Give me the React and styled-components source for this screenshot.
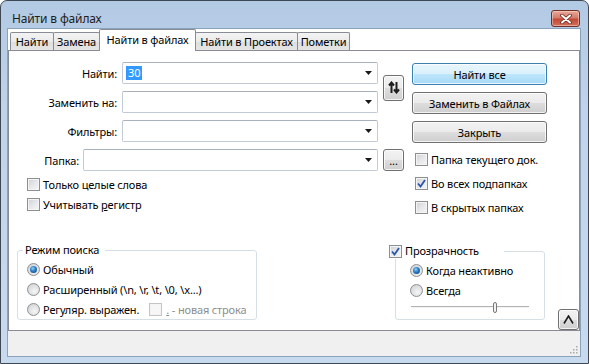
import React from 'react';
import styled, { createGlobalStyle } from 'styled-components';

const GlobalStyle = createGlobalStyle`
	html, body {
		margin: 0;
		padding: 0;
		background: #ffffff;
	}
	body {
		font-family: 'Noto Sans', 'Open Sans', sans-serif;
		font-size: 11px;
		letter-spacing: -0.15px;
		color: #000;
	}
`;

const Window = styled.div`
	width: 589px;
	height: 364px;
	box-sizing: border-box;
	display: flex;
	flex-direction: column;
	border: 1px solid #3f4852;
	border-radius: 7px 7px 0 0;
	background: linear-gradient(#b3cae4 0%, #bfd3ea 30%, #c8daee 100%);
	overflow: hidden;
`;

const TitleBar = styled.div`
	height: 27px;
	flex-shrink: 0;
	display: flex;
	align-items: flex-start;
	justify-content: space-between;
	padding: 0 8px 0 11px;
`;

const Title = styled.div`
	padding-top: 10px;
	line-height: 16px;
	font-size: 12px;
	color: #1e1e1e;
`;

const CloseButton = styled.div`
	margin-top: 9px;
	width: 29px;
	height: 17px;
	box-sizing: border-box;
	border: 1px solid #6e3128;
	border-radius: 3px;
	background: linear-gradient(#e9a99c 0%, #d47c6c 45%, #c24a37 55%, #d0705a 100%);
	box-shadow: inset 0 0 0 1px rgba(255, 220, 210, 0.5);
	display: flex;
	align-items: center;
	justify-content: center;
`;

const Frame = styled.div`
	flex: 1;
	display: flex;
	padding: 0 7px 6px 6px;
`;

const Client = styled.div`
	flex: 1;
	display: flex;
	flex-direction: column;
	border: 1px solid #8ba2bd;
	background: #ffffff;
`;

const TabStrip = styled.div`
	height: 21px;
	display: flex;
	align-items: flex-end;
	padding-left: 2px;
`;

const Tab = styled.div`
	position: relative;
	box-sizing: border-box;
	width: ${p => p.$w}px;
	height: ${p => (p.$active ? 22 : 18)}px;
	margin-bottom: ${p => (p.$active ? -1 : 0)}px;
	margin-left: ${p => (p.$first ? 0 : -1)}px;
	z-index: ${p => (p.$active ? 2 : 1)};
	border: 1px solid #898c95;
	border-bottom: ${p => (p.$active ? 'none' : '0')};
	border-radius: 2px 2px 0 0;
	background: ${p =>
		p.$active ? '#ffffff' : 'linear-gradient(#f3f3f3 0%, #ebebeb 50%, #dedede 51%, #e5e5e5 100%)'};
	display: flex;
	align-items: center;
	justify-content: center;
	padding-bottom: ${p => (p.$active ? 3 : 0)}px;
	white-space: nowrap;
`;

const Panel = styled.div`
	height: 281px;
	box-sizing: border-box;
	border: 1px solid #898c95;
	background: #ffffff;
	display: flex;
	flex-direction: column;
`;

const TopSection = styled.div`
	display: flex;
	padding-top: 11px;
`;

const LeftCol = styled.div`
	width: 395px;
	display: flex;
	flex-direction: column;
`;

const FormGrid = styled.div`
	display: grid;
	grid-template-columns: 108px 256px 21px;
	grid-template-rows: repeat(4, 22px);
	column-gap: 5px;
	row-gap: 7px;
`;

const Label = styled.div`
	display: flex;
	align-items: center;
	justify-content: flex-end;
	white-space: nowrap;
`;

const FolderRow = styled.div`
	grid-column: 1 / 3;
	display: flex;
	align-items: center;
	gap: 4px;
	& > ${Label} {
		flex: 1;
	}
`;

const Combo = styled.div`
	box-sizing: border-box;
	height: 22px;
	width: ${p => (p.$w ? `${p.$w}px` : 'auto')};
	display: flex;
	align-items: center;
	border: 1px solid #c2cad5;
	border-top-color: #a9b1bd;
	border-radius: 2px;
	background: #ffffff;
	padding: 0 5px 0 3px;
`;

const ComboText = styled.div`
	flex: 1;
	display: flex;
	align-items: center;
`;

const Selected = styled.span`
	background: #3399ff;
	color: #ffffff;
	line-height: 14px;
	padding: 0 2px;
`;

const Button = styled.div`
	box-sizing: border-box;
	width: ${p => p.$w || 135}px;
	height: ${p => p.$h || 22}px;
	border: 1px solid ${p => (p.$primary ? '#3c7fb1' : '#707070')};
	border-radius: 3px;
	background: ${p =>
		p.$primary
			? 'linear-gradient(#eaf6fd 0%, #d9f0fc 50%, #bee6fd 51%, #a7d9f5 100%)'
			: 'linear-gradient(#f2f2f2 0%, #ebebeb 50%, #dddddd 51%, #cfcfcf 100%)'};
	box-shadow: inset 0 0 0 1px rgba(255, 255, 255, 0.75);
	display: flex;
	align-items: center;
	justify-content: center;
	white-space: nowrap;
`;

const SwapCell = styled.div`
	grid-row: 1 / 3;
	grid-column: 3;
	display: flex;
	align-items: center;
`;

const ChecksLeft = styled.div`
	display: flex;
	flex-direction: column;
	gap: 7px;
	padding: 7px 0 0 18px;
`;

const RightCol = styled.div`
	margin-left: 8px;
	width: 135px;
	display: flex;
	flex-direction: column;
	padding-top: 1px;
	gap: 7px;
`;

const ChecksRight = styled.div`
	display: flex;
	flex-direction: column;
	gap: 11px;
	padding: 3px 0 0 3px;
`;

const CheckRow = styled.div`
	display: flex;
	align-items: center;
	height: 13px;
	gap: 3px;
	white-space: nowrap;
`;

const Box = styled.div`
	width: 13px;
	height: 13px;
	flex-shrink: 0;
	box-sizing: border-box;
	border: 1px solid ${p => (p.$disabled ? '#c4c4c4' : '#8e8f8f')};
	background: ${p =>
		p.$disabled ? '#f7f7f7' : 'linear-gradient(135deg, #cdd0d5 0%, #e6e7ea 50%, #f6f6f6 100%)'};
	box-shadow: inset 0 0 0 1px #f4f4f4;
	display: flex;
	align-items: center;
	justify-content: center;
`;

const BottomSection = styled.div`
	margin-top: auto;
	display: flex;
	align-items: flex-end;
	padding-left: 8px;
`;

const Group = styled.fieldset`
	margin: 0 ${p => p.$mr || 0}px 10px ${p => (p.$auto ? 'auto' : '0')};
	width: ${p => p.$w}px;
	box-sizing: border-box;
	border: 1px solid #d5dfe5;
	border-radius: 3px;
	padding: 1px 0 ${p => p.$pb || 0}px ${p => p.$pl}px;
	min-width: 0;
`;

const Legend = styled.legend`
	position: relative;
	left: ${p => p.$shift || 0}px;
	padding: 0 2px;
	line-height: 16px;
	display: flex;
	align-items: center;
	gap: 3px;
	background: #ffffff;
`;

const RadioRow = styled.div`
	height: 20px;
	display: flex;
	align-items: center;
	gap: 3px;
	white-space: nowrap;
`;

const Radio = styled.div`
	width: 13px;
	height: 13px;
	flex-shrink: 0;
	box-sizing: border-box;
	border-radius: 50%;
	border: 1px solid #8e8f8f;
	background: radial-gradient(circle at 60% 65%, #f6f6f6 0%, #dcdde0 60%, #c9ccd1 100%);
	display: flex;
	align-items: center;
	justify-content: center;
`;

const RadioDot = styled.div`
	width: 7px;
	height: 7px;
	border-radius: 50%;
	background: radial-gradient(circle at 40% 35%, #8fd0f7 0%, #2b7bc0 45%, #0d3a72 100%);
`;

const Disabled = styled.span`
	color: #8d8d8d;
	margin-left: 7px;
	display: flex;
	align-items: center;
	gap: 4px;
`;

const SliderRow = styled.div`
	height: 14px;
	width: 118px;
	margin-left: 1px;
	display: flex;
	align-items: center;
`;

const Track = styled.div`
	flex: 1;
	height: 0;
	border-top: 1px solid #b4b4b4;
	border-bottom: 1px solid #f3f3f3;
	display: flex;
	align-items: center;
`;

const Thumb = styled.div`
	margin-left: 82px;
	width: 4px;
	height: 11px;
	box-sizing: border-box;
	border: 1px solid #7a7a7a;
	border-radius: 2px;
	background: #f2f2f2;
`;

const Footer = styled.div`
	flex: 1;
	background: #f0f0f0;
	display: flex;
	justify-content: flex-end;
	align-items: flex-end;
	padding: 0 2px 2px 0;
`;

const DropArrow = () => (
	<svg width="7" height="4" viewBox="0 0 7 4">
		<path d="M0 0H7L3.5 4Z" fill="#1a1a1a" />
	</svg>
);

const SwapIcon = () => (
	<svg width="12" height="13" viewBox="0 0 12 13">
		<path d="M3.5 12V2M1 4.5L3.5 1.5L6 4.5" stroke="#1e1e1e" strokeWidth="2" fill="none" />
		<path d="M8.5 1V11M6 8.5L8.5 11.5L11 8.5" stroke="#1e1e1e" strokeWidth="2" fill="none" />
	</svg>
);

const CloseIcon = () => (
	<svg width="12" height="10" viewBox="0 0 12 10">
		<path d="M2 1.5L10 8.5M10 1.5L2 8.5" stroke="#6b2a22" strokeWidth="3.6" strokeLinecap="round" />
		<path d="M2 1.5L10 8.5M10 1.5L2 8.5" stroke="#ffffff" strokeWidth="2" strokeLinecap="round" />
	</svg>
);

const Check = () => (
	<svg width="9" height="9" viewBox="0 0 9 9">
		<path d="M1 4.5L3.5 7.5L8 1" stroke="#2a56a6" strokeWidth="1.8" fill="none" />
	</svg>
);

const UpChevron = () => (
	<svg width="11" height="9" viewBox="0 0 11 9">
		<path d="M1 8.5L5.5 1L10 8.5" stroke="#1e1e1e" strokeWidth="1.6" fill="none" />
	</svg>
);

const Grip = () => (
	<svg width="10" height="10" viewBox="0 0 10 10">
		{[[8, 2], [5, 5], [8, 5], [2, 8], [5, 8], [8, 8]].map(([x, y], i) => (
			<rect key={i} x={x} y={y} width="1.5" height="1.5" fill="#a9a9a9" />
		))}
	</svg>
);

const CheckBox = ({ checked, disabled }) => (
	<Box $disabled={disabled}>{checked && <Check />}</Box>
);

const tabs = [
	{ text: 'Найти', w: 44 },
	{ text: 'Замена', w: 47 },
	{ text: 'Найти в файлах', w: 97, active: true },
	{ text: 'Найти в Проектах', w: 103 },
	{ text: 'Пометки', w: 53 },
];

const App = () => {
	return (
		<>
			<GlobalStyle />
			<Window>
				<TitleBar>
					<Title>Найти в файлах</Title>
					<CloseButton>
						<CloseIcon />
					</CloseButton>
				</TitleBar>
				<Frame>
					<Client>
						<TabStrip>
							{tabs.map((t, i) => (
								<Tab key={t.text} $w={t.w} $active={t.active} $first={i === 0}>
									{t.text}
								</Tab>
							))}
						</TabStrip>
						<Panel>
							<TopSection>
								<LeftCol>
									<FormGrid>
										<Label>Найти:</Label>
										<Combo>
											<ComboText>
												<Selected>30</Selected>
											</ComboText>
											<DropArrow />
										</Combo>
										<SwapCell>
											<Button $w={21} $h={26}>
												<SwapIcon />
											</Button>
										</SwapCell>
										<Label>Заменить на:</Label>
										<Combo>
											<ComboText />
											<DropArrow />
										</Combo>
										<Label>Фильтры:</Label>
										<Combo>
											<ComboText />
											<DropArrow />
										</Combo>
										<FolderRow>
											<Label>Папка:</Label>
											<Combo $w={295}>
												<ComboText />
												<DropArrow />
											</Combo>
										</FolderRow>
										<Button $w={21}>...</Button>
									</FormGrid>
									<ChecksLeft>
										<CheckRow>
											<CheckBox />
											Только целые слова
										</CheckRow>
										<CheckRow>
											<CheckBox />
											<span>
												Учитывать <u>р</u>егистр
											</span>
										</CheckRow>
									</ChecksLeft>
								</LeftCol>
								<RightCol>
									<Button $primary>Найти все</Button>
									<Button>Заменить в Файлах</Button>
									<Button>Закрыть</Button>
									<ChecksRight>
										<CheckRow>
											<CheckBox />
											Папка текущего док.
										</CheckRow>
										<CheckRow>
											<CheckBox checked />
											Во всех подпапках
										</CheckRow>
										<CheckRow>
											<CheckBox />
											В скрытых папках
										</CheckRow>
									</ChecksRight>
								</RightCol>
							</TopSection>
							<BottomSection>
								<Group $w={240} $pl={9}>
									<Legend $shift={-4}>Режим поиска</Legend>
									<RadioRow>
										<Radio>
											<RadioDot />
										</Radio>
										Обычный
									</RadioRow>
									<RadioRow>
										<Radio />
										{'Расширенный (\\n, \\r, \\t, \\0, \\x...)'}
									</RadioRow>
									<RadioRow>
										<Radio />
										Регуляр. выражен.
										<Disabled>
											<CheckBox disabled />
											<span>
												<u>.</u> - новая строка
											</span>
										</Disabled>
									</RadioRow>
								</Group>
								<Group $w={150} $pl={14} $pb={5} $auto $mr={13}>
									<Legend $shift={-23}>
										<CheckBox checked />
										Прозрачность
									</Legend>
									<RadioRow>
										<Radio>
											<RadioDot />
										</Radio>
										Когда неактивно
									</RadioRow>
									<RadioRow>
										<Radio />
										Всегда
									</RadioRow>
									<SliderRow>
										<Track>
											<Thumb />
										</Track>
									</SliderRow>
								</Group>
								<Button $w={21} $h={21}>
									<UpChevron />
								</Button>
							</BottomSection>
						</Panel>
						<Footer>
							<Grip />
						</Footer>
					</Client>
				</Frame>
			</Window>
		</>
	);
};

export default App;
